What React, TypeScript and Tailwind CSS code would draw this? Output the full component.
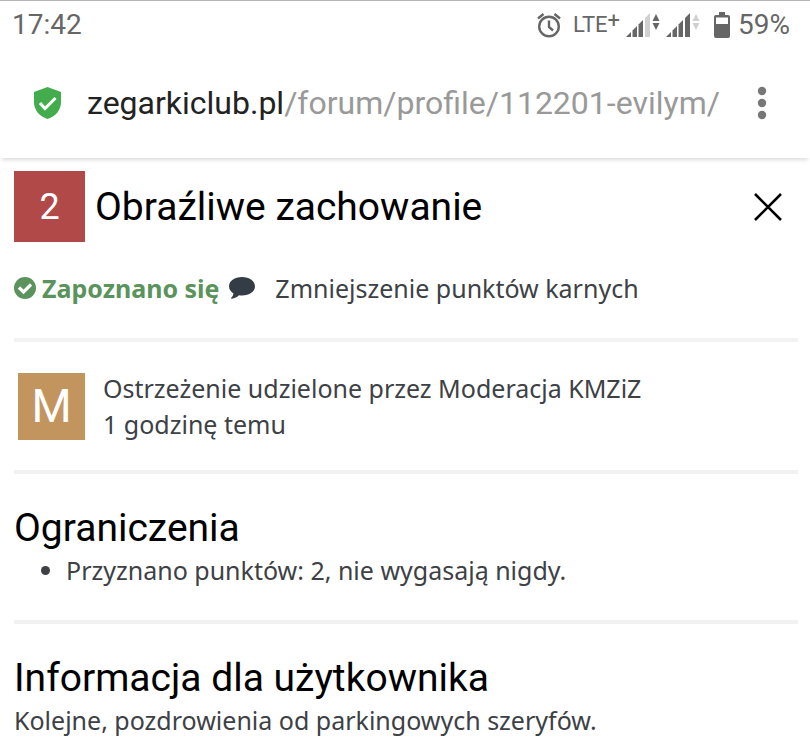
const signalBars = ['M0 25l5-5v5z', 'M6.5 25v-6.5L11 14v11z', 'M12.500 25V12.500L17 8v17z'];

function Signal({ full }: { full?: boolean }) {
  return (
    <svg width="34" height="26" viewBox="0 0 34 26" className="shrink-0">
      {signalBars.map(d => (
        <path key={d} d={d} fill="#666" />
      ))}
      <path d="M19 25V6l5-5v24z" fill={full ? '#666' : '#d0d0d0'} />
      <path d="M30 2l3.5 7h-7z" fill={full ? '#d0d0d0' : '#666'} />
      <path d="M30 18l3.5-7h-7z" fill={full ? '#d0d0d0' : '#666'} />
    </svg>
  );
}

function StatusBar() {
  return (
    <div className="flex h-12 items-center justify-between border-t border-[#b4b4b4] px-3 font-['Roboto',sans-serif] text-[28px] text-[#666]">
      <span>17:42</span>
      <div className="flex items-center pr-2">
        <svg width="24" height="26" viewBox="0 0 24 26" fill="none" stroke="#666" strokeWidth="2.4">
          <circle cx="12" cy="14.5" r="9.8" />
          <path d="M12 8.5v6.5l4 3.5M1 6.5l5.5-4.5M23 6.5L17.5 2" />
        </svg>
        <span className="ml-3 flex text-[22px] leading-7">
          LTE<span className="text-[22px] leading-5">+</span>
        </span>
        <span className="ml-1.5 flex gap-1.5">
          <Signal />
          <Signal full />
        </span>
        <svg width="16" height="26" viewBox="0 0 16 26" className="ml-3.5 shrink-0">
          <path d="M5 0h6v3h3q2 0 2 2v19q0 2-2 2H2q-2 0-2-2V5q0-2 2-2h3z" fill="#666" />
          <path d="M2 5.5h12V12H2z" fill="#fff" />
        </svg>
        <span className="ml-2">59%</span>
      </div>
    </div>
  );
}

function AddressBar() {
  return (
    <div className="flex h-[110px] items-center px-8 font-['Roboto',sans-serif] shadow-[0_4px_4px_-2px_rgba(0,0,0,0.14)]">
      <svg width="31" height="34" viewBox="0 0 31 34" className="shrink-0">
        <path d="M15.5 1L29 6v10c0 8-5 14-13.5 17C7 30 2 24 2 16V6z" fill="#43ad4e" />
        <path d="M8 17l5 5.5L23.5 12" fill="none" stroke="#fff" strokeWidth="3" />
      </svg>
      <p className="ml-6 grow whitespace-nowrap text-[32px] text-[#999]">
        <span className="text-[#222]">zegarkiclub.pl</span>/forum/profile/112201-evilym/
      </p>
      <button type="button" aria-label="Menu" className="flex w-8 justify-center">
        <svg width="10" height="34" viewBox="0 0 10 34" fill="#777">
          <circle cx="5" cy="5" r="4.2" />
          <circle cx="5" cy="17" r="4.2" />
          <circle cx="5" cy="29" r="4.2" />
        </svg>
      </button>
    </div>
  );
}

function SectionTitle({ children }: { children: string }) {
  return <h2 className="font-['Roboto',sans-serif] text-[39px] leading-[48px] text-black">{children}</h2>;
}

export default function App() {
  return (
    <div className="min-h-screen bg-white font-['Noto_Sans',sans-serif] text-[25px] leading-9 text-[#3d4145]">
      <StatusBar />
      <AddressBar />
      <main className="pl-[14px] pr-3">
        <header className="flex items-center pt-[13px]">
          <span className="flex size-[71px] shrink-0 items-center justify-center bg-[#b04947] font-['Roboto',sans-serif] text-[36px] text-white">
            2
          </span>
          <h1 className="ml-2.5 grow font-['Roboto',sans-serif] text-[39px] leading-[48px] text-black">Obraźliwe zachowanie</h1>
          <button type="button" aria-label="Zamknij" className="mr-4">
            <svg width="28" height="28" viewBox="0 0 28 28" fill="none" stroke="#000" strokeWidth="2.6">
              <path d="M1 1l26 26M27 1L1 27" />
            </svg>
          </button>
        </header>

        <div className="flex items-center whitespace-nowrap border-b-4 border-[#f2f2f2] pb-8 pt-7">
          <svg width="22" height="22" viewBox="0 0 22 22" className="shrink-0">
            <circle cx="11" cy="11" r="11" fill="#5a935c" />
            <path d="M5 10.5l4.5 4.5L17 7.5" fill="none" stroke="#fff" strokeWidth="3.2" />
          </svg>
          <strong className="ml-1.5 text-[#5a935c]">Zapoznano się</strong>
          <svg width="26" height="22" viewBox="0 0 26 22" className="ml-2.5 shrink-0" fill="#343d45">
            <path d="M13 0C5.5 0 0 4 0 9.3c0 3 1.7 5.5 4.5 7.2-.3 1.8-1.2 3.2-2.3 4.3-.4.5-.1 1 .6.9 3-.5 5.4-1.7 7.2-3.5 1 .2 2 .3 3 .3 7.5 0 13-4 13-9.2S20.5 0 13 0z" />
          </svg>
          <span className="ml-5">Zmniejszenie punktów karnych</span>
        </div>

        <div className="flex items-center border-b-4 border-[#f2f2f2] py-7 pl-1">
          <span className="flex size-[67px] shrink-0 items-center justify-center bg-[#c3955e] font-['Roboto',sans-serif] text-[46px] text-white">
            M
          </span>
          <p className="ml-[18px]">
            Ostrzeżenie udzielone przez Moderacja KMZiZ
            <br />1 godzinę temu
          </p>
        </div>

        <section className="border-b-4 border-[#f2f2f2] pb-8 pt-[30px]">
          <SectionTitle>Ograniczenia</SectionTitle>
          <ul className="list-disc pl-[52px]">
            <li>Przyznano punktów: 2, nie wygasają nigdy.</li>
          </ul>
        </section>

        <section className="pt-[30px]">
          <SectionTitle>Informacja dla użytkownika</SectionTitle>
          <p>Kolejne, pozdrowienia od parkingowych szeryfów.</p>
        </section>
      </main>
    </div>
  );
}
